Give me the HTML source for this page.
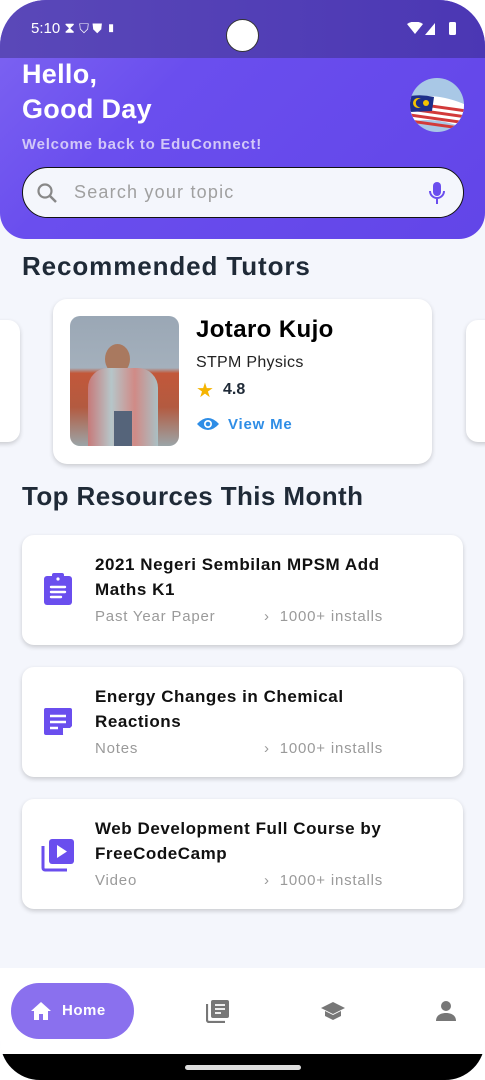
<!DOCTYPE html>
<html><head><meta charset="utf-8"><style>
*{margin:0;padding:0;box-sizing:border-box}
body{width:485px;height:1080px;background:#fff;font-family:"Liberation Sans",sans-serif;overflow:hidden;position:relative}
.screen{position:absolute;inset:0;background:#f4f6fc;border-radius:46px 46px 40px 40px;overflow:hidden}
.hdr{position:absolute;left:0;top:0;width:485px;height:239px;background:linear-gradient(135deg,#7f66f2 0%,#6a4eee 35%,#6245e8 100%);border-radius:0 0 26px 26px}
.sb{position:absolute;left:0;top:0;width:485px;height:58px;background:linear-gradient(90deg,#5a48b8,#4b37b4)}
.t{position:absolute;white-space:nowrap}
.card{position:absolute;background:#fff;border-radius:12px;box-shadow:0 2px 5px rgba(0,0,0,.18)}
.rt{font-weight:bold;font-size:17px;color:#111;line-height:25px;letter-spacing:0.55px}
.rs{font-size:15px;color:#9a9a9a;letter-spacing:0.8px}
</style></head><body><div class="screen">
<div class="hdr"></div>
<div class="sb"></div>
<div class="t" style="left:31px;top:20px;color:#fff;font-size:15px">5:10 ⧗ <span style="font-size:13px">⛉ ⛊ ▮</span></div>
<div style="position:absolute;left:226px;top:19px;width:33px;height:33px;border-radius:50%;background:#fff;border:1px solid #333"></div>
<svg style="position:absolute;left:407px;top:22px" width="50" height="14"><path d="M0 2 Q8 -3 16 2 L8 12Z" fill="#fff"/><path d="M28 1 L28 13 L18 13Z" fill="#fff"/><rect x="42" y="0" width="7" height="13" rx="1.5" fill="#fff"/></svg>
<div class="t" style="left:22px;top:57px;color:#fff;font-weight:bold;font-size:27px;line-height:35px;letter-spacing:0.3px">Hello,<br>Good Day</div>
<div class="t" style="left:22px;top:136px;color:#d2c8f8;font-weight:bold;font-size:15px;letter-spacing:0.75px">Welcome back to EduConnect!</div>
<svg style="position:absolute;left:410px;top:78px" width="54" height="54"><defs><clipPath id="c"><circle cx="27" cy="27" r="27"/></clipPath></defs><g clip-path="url(#c)"><rect width="54" height="54" fill="#a9c8e6"/><path d="M0 20 Q25 14 54 26 L54 50 Q25 38 0 44Z" fill="#fff"/><path d="M0 25h54M0 31h54M0 37h54M0 43h54" stroke="#d23a3a" stroke-width="3" transform="skewY(8)"/><path d="M0 18 Q12 16 24 19 L22 33 L0 34Z" fill="#1d2f8a"/><circle cx="8" cy="25" r="5" fill="#f5c400"/><circle cx="10" cy="25" r="4.2" fill="#1d2f8a"/><circle cx="16" cy="25" r="3" fill="#f5c400"/></g></svg>
<div style="position:absolute;left:22px;top:167px;width:442px;height:51px;border-radius:26px;background:#f4f6fc;border:1.5px solid #111"></div>
<svg style="position:absolute;left:36px;top:182px" width="22" height="22"><circle cx="9" cy="9" r="6.5" fill="none" stroke="#888" stroke-width="2.2"/><path d="M14 14l6 6" stroke="#888" stroke-width="2.5"/></svg>
<div class="t" style="left:74px;top:182px;font-size:18px;color:#a0a0a0;letter-spacing:1.2px">Search your topic</div>
<svg style="position:absolute;left:428px;top:180px" width="18" height="26"><rect x="5" y="2" width="8" height="14" rx="4" fill="#6a4eee"/><path d="M2 11a7 7 0 0 0 14 0M9 18v6" stroke="#6a4eee" stroke-width="2" fill="none"/></svg>
<div class="t" style="left:22px;top:251px;font-weight:bold;font-size:26px;color:#1f2a37;letter-spacing:0.9px">Recommended Tutors</div>
<div class="card" style="left:-20px;top:320px;width:40px;height:122px"></div>
<div class="card" style="left:466px;top:320px;width:40px;height:122px"></div>
<div class="card" style="left:53px;top:299px;width:379px;height:165px;border-radius:14px"></div>
<div style="position:absolute;left:70px;top:316px;width:109px;height:130px;border-radius:10px;overflow:hidden;background:linear-gradient(180deg,#9aa7b5 0%,#a4b0bc 40%,#c2583a 44%,#b35a40 70%,#9ba5a8 100%)">
<div style="position:absolute;left:35px;top:28px;width:25px;height:30px;border-radius:50%;background:#a9795f"></div>
<div style="position:absolute;left:18px;top:52px;width:70px;height:78px;border-radius:20px 20px 0 0;background:linear-gradient(90deg,#c77a7a,#b6c6c9,#d08a86,#aac0c4)"></div>
<div style="position:absolute;left:44px;top:95px;width:18px;height:35px;background:#55647a"></div></div>
<div class="t" style="left:196px;top:316px;font-weight:bold;font-size:24px;color:#000;letter-spacing:0.4px">Jotaro Kujo</div>
<div class="t" style="left:196px;top:354px;font-size:16px;color:#222;letter-spacing:0.3px">STPM Physics</div>
<div class="t" style="left:196px;top:378px;font-size:20px;color:#f5b400">★</div>
<div class="t" style="left:223px;top:381px;font-weight:bold;font-size:16px;color:#1f2a37">4.8</div>
<svg style="position:absolute;left:196px;top:416px" width="24" height="16"><path d="M1 8Q12 -4 23 8Q12 20 1 8Z" fill="#2e8de6"/><circle cx="12" cy="8" r="4" fill="#fff"/><circle cx="12" cy="8" r="2.3" fill="#2e8de6"/></svg>
<div class="t" style="left:228px;top:416px;font-weight:bold;font-size:15px;color:#2e8de6;letter-spacing:0.8px">View Me</div>
<div class="t" style="left:22px;top:481px;font-weight:bold;font-size:26px;color:#1f2a37;letter-spacing:0.4px">Top Resources This Month</div>

<div class="card" style="left:22px;top:535px;width:441px;height:110px"></div>
<svg style="position:absolute;left:43px;top:572px" width="30" height="34"><rect x="1" y="4" width="28" height="29" rx="3" fill="#6a4eee"/><rect x="9" y="1" width="12" height="6" rx="2" fill="#6a4eee"/><circle cx="15" cy="7" r="1.6" fill="#fff"/><path d="M8 15h14M8 20h14M8 25h10" stroke="#fff" stroke-width="2.4" stroke-linecap="round"/></svg>
<div class="t rt" style="left:95px;top:552px">2021 Negeri Sembilan MPSM Add<br>Maths K1</div>
<div class="t rs" style="left:95px;top:608px">Past Year Paper</div>
<div class="t rs" style="left:264px;top:608px">›&nbsp; 1000+ installs</div>

<div class="card" style="left:22px;top:667px;width:441px;height:110px"></div>
<svg style="position:absolute;left:43px;top:707px" width="30" height="30"><path d="M3 1h24a2 2 0 0 1 2 2v16l-9 9H3a2 2 0 0 1-2-2V3a2 2 0 0 1 2-2z" fill="#6a4eee"/><path d="M7 9h16M7 15h16M7 21h8" stroke="#fff" stroke-width="2.4"/><path d="M20 28v-7h9" fill="#fff"/></svg>
<div class="t rt" style="left:95px;top:684px">Energy Changes in Chemical<br>Reactions</div>
<div class="t rs" style="left:95px;top:740px">Notes</div>
<div class="t rs" style="left:264px;top:740px">›&nbsp; 1000+ installs</div>

<div class="card" style="left:22px;top:799px;width:441px;height:110px"></div>
<svg style="position:absolute;left:41px;top:838px" width="34" height="34"><path d="M2 8v22a2 2 0 0 0 2 2h22" stroke="#6a4eee" stroke-width="3" fill="none"/><rect x="8" y="1" width="25" height="25" rx="3" fill="#6a4eee"/><path d="M16 7v13l10-6.5z" fill="#fff"/></svg>
<div class="t rt" style="left:95px;top:816px">Web Development Full Course by<br>FreeCodeCamp</div>
<div class="t rs" style="left:95px;top:872px">Video</div>
<div class="t rs" style="left:264px;top:872px">›&nbsp; 1000+ installs</div>

<div style="position:absolute;left:0;top:968px;width:485px;height:86px;background:#fff"></div>
<div style="position:absolute;left:11px;top:983px;width:123px;height:56px;border-radius:28px;background:#8a70ee"></div>
<svg style="position:absolute;left:30px;top:1001px" width="22" height="20"><path d="M11 1L1 10h3v9h5v-6h4v6h5v-9h3z" fill="#fff"/></svg>
<div class="t" style="left:62px;top:1002px;color:#fff;font-weight:bold;font-size:15px;letter-spacing:0.5px">Home</div>
<svg style="position:absolute;left:206px;top:999px" width="24" height="24"><path d="M1 5v16a2 2 0 0 0 2 2h16" stroke="#777" stroke-width="2.2" fill="none"/><rect x="5" y="1" width="18" height="18" rx="2" fill="#777"/><path d="M9 6h10M9 10h10M9 14h6" stroke="#fff" stroke-width="1.8"/></svg>
<svg style="position:absolute;left:320px;top:1001px" width="26" height="20"><path d="M13 1L1 7l12 6 12-6z" fill="#777"/><path d="M5 10v5l8 4 8-4v-5l-8 4z" fill="#777"/></svg>
<svg style="position:absolute;left:436px;top:1000px" width="20" height="22"><circle cx="10" cy="6" r="5" fill="#777"/><path d="M0 21c0-6 5-8 10-8s10 2 10 8z" fill="#777"/></svg>
<div style="position:absolute;left:0;top:1054px;width:485px;height:26px;background:#000"></div>
<div style="position:absolute;left:185px;top:1065px;width:116px;height:5px;border-radius:3px;background:#ddd"></div>
</div></body></html>
